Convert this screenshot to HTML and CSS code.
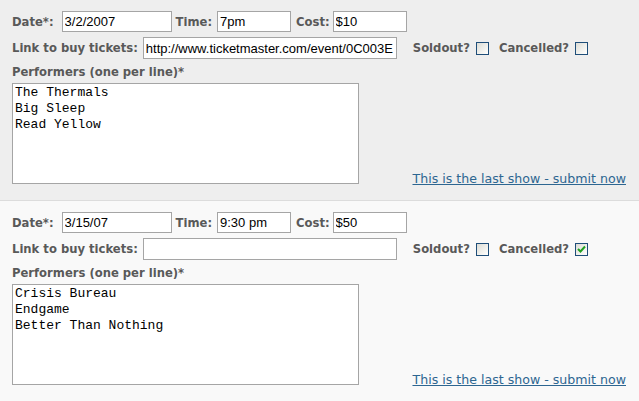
FILE: index.html
```html
<!DOCTYPE html>
<html>
<head>
<meta charset="utf-8">
<link rel="stylesheet" href="styles.css">
</head>
<body>
<div class="show show-odd">
  <div class="row">
    <label class="lbl lbl-date">Date*:</label><input class="field f-date" value="3/2/2007">
    <label class="lbl lbl-time">Time:</label><input class="field f-short" value="7pm">
    <label class="lbl lbl-cost">Cost:</label><input class="field f-short" value="$10">
  </div>
  <div class="row row2">
    <label class="lbl">Link to buy tickets:</label><input class="field f-link" value="http://www.ticketmaster.com/event/0C003E">
    <label class="lbl lbl-sold">Soldout?</label><span class="cb"></span>
    <label class="lbl lbl-canc">Cancelled?</label><span class="cb"></span>
  </div>
  <div class="lbl perf">Performers (one per line)*</div>
  <div class="bottom">
    <textarea class="ta">The Thermals
Big Sleep
Read Yellow</textarea>
    <a class="last" href="#">This is the last show - submit now</a>
  </div>
</div>
<div class="show show-even">
  <div class="row">
    <label class="lbl lbl-date">Date*:</label><input class="field f-date" value="3/15/07">
    <label class="lbl lbl-time">Time:</label><input class="field f-short" value="9:30 pm">
    <label class="lbl lbl-cost">Cost:</label><input class="field f-short" value="$50">
  </div>
  <div class="row row2">
    <label class="lbl">Link to buy tickets:</label><input class="field f-link" value="">
    <label class="lbl lbl-sold">Soldout?</label><span class="cb"></span>
    <label class="lbl lbl-canc">Cancelled?</label><span class="cb cb-on"><svg width="9" height="8" viewBox="0 0 9 8"><path d="M1 4 L3.5 6.5 L8 1.5" fill="none" stroke="#21a121" stroke-width="2"/></svg></span>
  </div>
  <div class="lbl perf">Performers (one per line)*</div>
  <div class="bottom">
    <textarea class="ta">Crisis Bureau
Endgame
Better Than Nothing</textarea>
    <a class="last" href="#">This is the last show - submit now</a>
  </div>
</div>
</body>
</html>
```
FILE: styles.css
```css
* { box-sizing: border-box; }
html, body { margin: 0; padding: 0; }
body {
  width: 639px;
  height: 401px;
  overflow: hidden;
  font-family: "DejaVu Sans", Verdana, sans-serif;
  background: #f9f9f9;
}
.show {
  padding: 11px 13px 0 12px;
  height: 200px;
}
.show-odd {
  background: #eeeeee;
  border-bottom: 1px solid #dcdcdc;
  height: 201px;
}
.show-even {
  background: #f9f9f9;
}
.row {
  display: flex;
  align-items: center;
  height: 21px;
}
.row2 {
  margin-top: 5px;
  height: 22px;
}
.lbl {
  font-weight: bold;
  font-size: 11.6px;
  color: #595959;
  white-space: nowrap;
  margin-right: 5px;
}
.lbl-date { margin-right: 8px; }
.lbl-time { margin-left: 4px; }
.lbl-cost { margin-left: 5px; margin-right: 3px; }
.lbl-sold { margin-left: 16px; margin-right: 6px; }
.lbl-canc { margin-left: 10px; margin-right: 6px; }
.field {
  font-family: "Liberation Sans", Arial, sans-serif;
  font-size: 13px;
  color: #000;
  background: #fff;
  border: 1px solid #a5a5a5;
  height: 21px;
  padding: 0 2px;
  margin: 0;
  outline: none;
}
.f-date { width: 110px; }
.f-short { width: 74px; }
.f-link { width: 254px; height: 22px; }
.cb {
  display: inline-flex;
  align-items: center;
  justify-content: center;
  width: 13px;
  height: 13px;
  border: 1px solid #1f4e79;
  background: linear-gradient(135deg, #dcdcd6 0%, #f2f2ee 60%, #ffffff 100%);
}
.perf {
  margin-top: 5px;
  height: 17px;
  line-height: 17px;
}
.bottom {
  margin-top: 2px;
  display: flex;
  justify-content: space-between;
  align-items: flex-end;
}
.ta {
  width: 347px;
  height: 101px;
  margin: 0;
  padding: 1px 2px;
  border: 1px solid #a5a5a5;
  background: #fff;
  font-family: "Liberation Mono", "Courier New", monospace;
  font-size: 13px;
  line-height: 16px;
  color: #000;
  resize: none;
  overflow: hidden;
  outline: none;
}
.last {
  font-size: 12.6px;
  color: #2d6691;
  text-decoration: underline;
  line-height: 15px;
  margin-bottom: -2px;
  white-space: nowrap;
}
```
